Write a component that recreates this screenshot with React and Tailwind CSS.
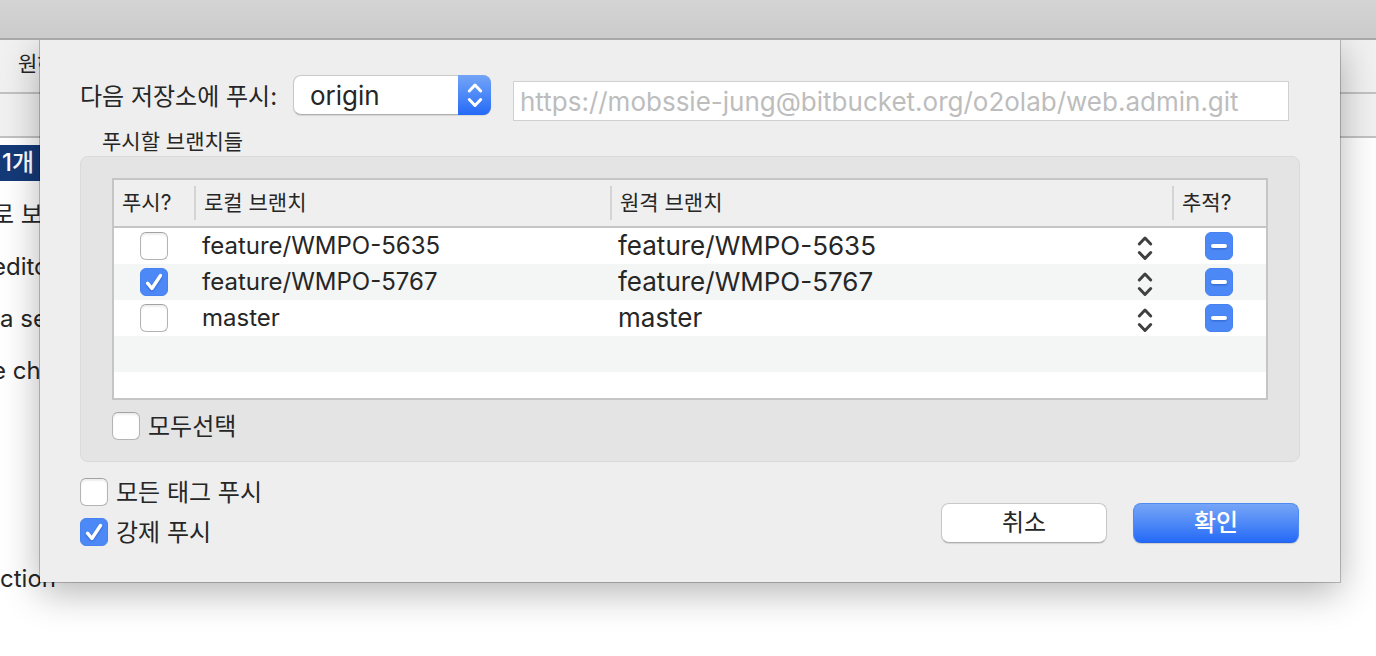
import React, { useEffect, useRef, useState } from 'react';
import clsx from 'clsx';

const branches = [
    { name: 'feature/WMPO-5635', push: false },
    { name: 'feature/WMPO-5767', push: true },
    { name: 'master', push: false },
];

const historyRows = [
    { text: '로 보', clipped: true },
    { text: 'edito', clipped: true },
    { text: 'a se' },
    { text: 'e cha', clipped: true },
    { text: '' },
    { text: '' },
    { text: '' },
    { text: 'ction' },
];

const UpDownArrows = ({ className }) => (
    <svg viewBox="0 0 16 26" className={className} fill="none" stroke="currentColor" strokeWidth="3" strokeLinecap="round" strokeLinejoin="round" aria-hidden="true">
        <path d="M2.300 9 8 3l5.700 6" />
        <path d="m2.300 17.500 5.700 6 5.700-6" />
    </svg>
);

const Checkbox = ({ mixed = false, ...props }) => {
    const ref = useRef(null);

    useEffect(() => {
        ref.current.indeterminate = mixed;
    }, [mixed]);

    return (
        <span className="inline-grid size-7 shrink-0 align-top">
            <input
                ref={ref}
                type="checkbox"
                className="peer col-start-1 row-start-1 size-7 appearance-none rounded-md border border-[#b4b4b4] border-t-[#a2a2a2] bg-white shadow-[inset_0_2px_2px_rgba(0,0,0,0.07)] checked:border-[#4683f0] checked:bg-[#4d89f6] checked:shadow-none indeterminate:border-[#4683f0] indeterminate:bg-[#4d89f6] indeterminate:shadow-none"
                {...props}
            />
            <svg viewBox="0 0 28 28" className="pointer-events-none col-start-1 row-start-1 hidden size-7 text-white drop-shadow-[0_1px_1px_rgba(0,40,140,0.4)] peer-checked:block" fill="none" stroke="currentColor" strokeWidth="3.400" strokeLinecap="round" strokeLinejoin="round" aria-hidden="true">
                <path d="m7.500 15.200 4.400 5.300L20.500 7.500" />
            </svg>
            <svg viewBox="0 0 28 28" className="pointer-events-none col-start-1 row-start-1 hidden size-7 text-white drop-shadow-[0_1px_1px_rgba(0,40,140,0.4)] peer-indeterminate:block" fill="none" stroke="currentColor" strokeWidth="4" strokeLinecap="round" aria-hidden="true">
                <path d="M8 14h12" />
            </svg>
        </span>
    );
};

const LabeledCheckbox = ({ id, label, ...props }) => (
    <div className="flex h-7 items-start gap-2">
        <Checkbox id={id} {...props} />
        <label htmlFor={id} className="text-[24px] leading-[30px]">{label}</label>
    </div>
);

const HeaderCell = ({ children }) => (
    <th scope="col" className="p-0 font-normal">
        <div className="h-[34px] border-l-2 border-[#d4d4d4] pl-2 leading-[34px]">{children}</div>
    </th>
);

const BranchTable = () => (
    <div className="border-2 border-[#c5c5c5] bg-white">
        <table className="w-full table-fixed border-separate border-spacing-0 text-left">
            <colgroup>
                <col className="w-[80px]" />
                <col className="w-[416px]" />
                <col />
                <col className="w-[94px]" />
            </colgroup>
            <thead>
                <tr className="h-12 bg-[#efefef] text-[21px] *:border-b-2 *:border-[#c5c5c5]">
                    <th scope="col" className="p-0 font-normal">
                        <div className="h-[34px] pl-2 leading-[34px]">푸시?</div>
                    </th>
                    <HeaderCell>로컬 브랜치</HeaderCell>
                    <HeaderCell>원격 브랜치</HeaderCell>
                    <HeaderCell>추적?</HeaderCell>
                </tr>
            </thead>
            <tbody>
                {branches.map((branch) => (
                    <tr key={branch.name} className="h-9 even:bg-[#f4f5f5]">
                        <td className="p-0 text-center">
                            <Checkbox defaultChecked={branch.push} aria-label={`${branch.name} 푸시`} />
                        </td>
                        <td className="p-0 pl-2 text-[24px] leading-9">{branch.name}</td>
                        <td className="p-0">
                            <div className="grid items-center">
                                <select aria-label={`${branch.name} 원격 브랜치`} className="col-start-1 row-start-1 h-9 appearance-none bg-transparent pl-2 text-[26px] leading-9">
                                    <option>{branch.name}</option>
                                </select>
                                <UpDownArrows className="pointer-events-none col-start-1 row-start-1 mt-1 mr-[19px] h-[26px] w-4 justify-self-end text-[#404040]" />
                            </div>
                        </td>
                        <td className="p-0 text-center">
                            <Checkbox mixed aria-label={`${branch.name} 추적`} />
                        </td>
                    </tr>
                ))}
            </tbody>
        </table>
        <div className="h-9 bg-[#f4f5f5]" />
        <div className="h-[26px]" />
    </div>
);

const PushDialog = () => {
    const [remote, setRemote] = useState('origin');

    return (
        <form
            role="dialog"
            aria-label="푸시"
            onSubmit={(e) => e.preventDefault()}
            className="absolute top-10 right-9 left-10 bg-[#eeeeee] px-10 pt-[35px] pb-9 shadow-[0_0_0_1px_rgba(0,0,0,0.22),0_10px_36px_rgba(0,0,0,0.3)]"
        >
            <div className="flex items-start">
                <label htmlFor="remote" className="w-[213px] shrink-0 text-[24px] leading-[44px] whitespace-nowrap">다음 저장소에 푸시:</label>
                <div className="grid w-[198px] shrink-0">
                    <select
                        id="remote"
                        value={remote}
                        onChange={(e) => setRemote(e.target.value)}
                        className="col-start-1 row-start-1 h-10 appearance-none rounded-lg border border-[#c8c8c8] border-b-[#adadad] bg-white pl-4 text-[26px] shadow-[0_1px_1px_rgba(0,0,0,0.1)]"
                    >
                        <option>origin</option>
                    </select>
                    <span className="pointer-events-none col-start-1 row-start-1 flex h-10 w-[33px] items-center justify-center justify-self-end rounded-r-lg bg-linear-to-b from-[#73a4f6] to-[#2469f7] text-white">
                        <UpDownArrows className="h-[26px] w-4" />
                    </span>
                </div>
                <input
                    type="text"
                    readOnly
                    aria-label="저장소 URL"
                    value="https://mobssie-jung@bitbucket.org/o2olab/web.admin.git"
                    className="mt-1.5 mr-[11px] ml-[22px] h-10 min-w-0 flex-1 border border-[#d0d0d0] bg-white px-1.5 text-[26px] text-[#bdbdbd]"
                />
            </div>

            <div role="group" aria-labelledby="branches-title">
                <div id="branches-title" className="mt-1.5 pl-[22px] text-[21px] leading-[29px]">푸시할 브랜치들</div>
                <div className="rounded-lg border border-[#dadada] bg-[#e4e4e4] px-[31px] pt-[21px] pb-[21px]">
                    <BranchTable />
                    <div className="mt-3">
                        <LabeledCheckbox id="select-all" label="모두선택" />
                    </div>
                </div>
            </div>

            <div className="mt-4 flex items-center justify-between">
                <div className="flex flex-col gap-3">
                    <LabeledCheckbox id="push-tags" label="모든 태그 푸시" />
                    <LabeledCheckbox id="force-push" label="강제 푸시" defaultChecked />
                </div>
                <div className="mt-[22px] mr-px flex gap-[26px]">
                    <button type="button" className="h-10 w-[166px] rounded-lg border border-[#c8c8c8] border-b-[#adadad] bg-white text-[24px] leading-9 shadow-[0_1px_1px_rgba(0,0,0,0.1)]">취소</button>
                    <button type="submit" className="h-10 w-[166px] rounded-lg border border-[#4f8af0] border-b-[#2465ee] bg-linear-to-b from-[#76a5f6] to-[#2469f7] text-[24px] leading-9 font-medium text-white shadow-[0_1px_1px_rgba(0,0,0,0.15)]">확인</button>
                </div>
            </div>
        </form>
    );
};

const App = () => (
    <div className="relative min-h-screen overflow-hidden bg-white font-['Inter','Noto_Sans_CJK_KR',sans-serif] text-[#262626]">
        <header className="relative z-10 h-10 border-b-2 border-[#a8a8a8] bg-linear-to-b from-[#d4d4d4] to-[#cbcbcb]" />
        <div className="h-[54px] border-b-2 border-[#c2c2c2] bg-[#f1f1f1] pl-[18px] text-[21px] leading-[48px] whitespace-nowrap">원하</div>
        <div className="h-11 border-b-2 border-[#c2c2c2] bg-[#f1f1f1]" />
        <ul className="py-[7px] text-[24px] whitespace-nowrap">
            <li className="mb-2 h-9 w-20 bg-[#143a78] pl-0.5 text-[24px] leading-9 font-medium text-white">1개</li>
            {historyRows.map((row, i) => (
                <li key={i} className={clsx('h-[52px] leading-[52px]', row.clipped && '-ml-2')}>{row.text}</li>
            ))}
        </ul>
        <PushDialog />
    </div>
);

export default App;
